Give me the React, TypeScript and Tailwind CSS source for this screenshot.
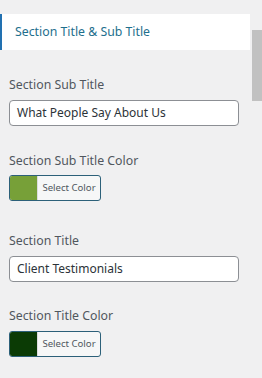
const font = { fontFamily: '"Segoe UI", "Noto Sans", sans-serif' };

function Label({ children }: { children: string }) {
  return <div className="text-[12.3px] leading-[18px] text-[#50575e] px-[9px]">{children}</div>;
}

function TextField({ value }: { value: string }) {
  return (
    <div className="px-[9px]">
      <div className="w-[230px] h-[26px] rounded-[4px] border border-[#8c8f94] bg-white flex items-center px-[7px] text-[12px] text-[#2c3338]">
        {value}
      </div>
    </div>
  );
}

function ColorButton({ color }: { color: string }) {
  return (
    <div className="px-[9px]">
      <div className="w-[92px] h-[26px] rounded-[3px] border border-[#2c6079] bg-[#f6f7f7] flex overflow-hidden">
        <div className="w-[27px] h-full" style={{ backgroundColor: color }} />
        <div className="flex-1 border-l border-[#dcdcde] flex items-center justify-center text-[9.6px] text-[#50575e]">
          Select Color
        </div>
      </div>
    </div>
  );
}

export default function App() {
  return (
    <div className="w-[262px] h-[378px] bg-[#f0f0f1] relative overflow-hidden" style={font}>
      <div className="absolute right-0 top-[30px] w-[10px] h-[71px] bg-[#c1c1c1]" />
      <div className="pt-[14px] w-[250px]">
        <div className="h-[36px] bg-white border-l-[2px] border-[#2271b1] flex items-center pl-[13px] text-[12.3px] text-[#1e6f8d]">
          Section Title &amp; Sub Title
        </div>
      </div>
      <div className="pt-[26px]">
        <Label>Section Sub Title</Label>
        <div className="h-[6px]" />
        <TextField value="What People Say About Us" />
        <div className="h-[26px]" />
        <Label>Section Sub Title Color</Label>
        <div className="h-[5px]" />
        <ColorButton color="#77a038" />
        <div className="h-[31px]" />
        <Label>Section Title</Label>
        <div className="h-[6px]" />
        <TextField value="Client Testimonials" />
        <div className="h-[25px]" />
        <Label>Section Title Color</Label>
        <div className="h-[6px]" />
        <ColorButton color="#0b3b05" />
      </div>
    </div>
  );
}
